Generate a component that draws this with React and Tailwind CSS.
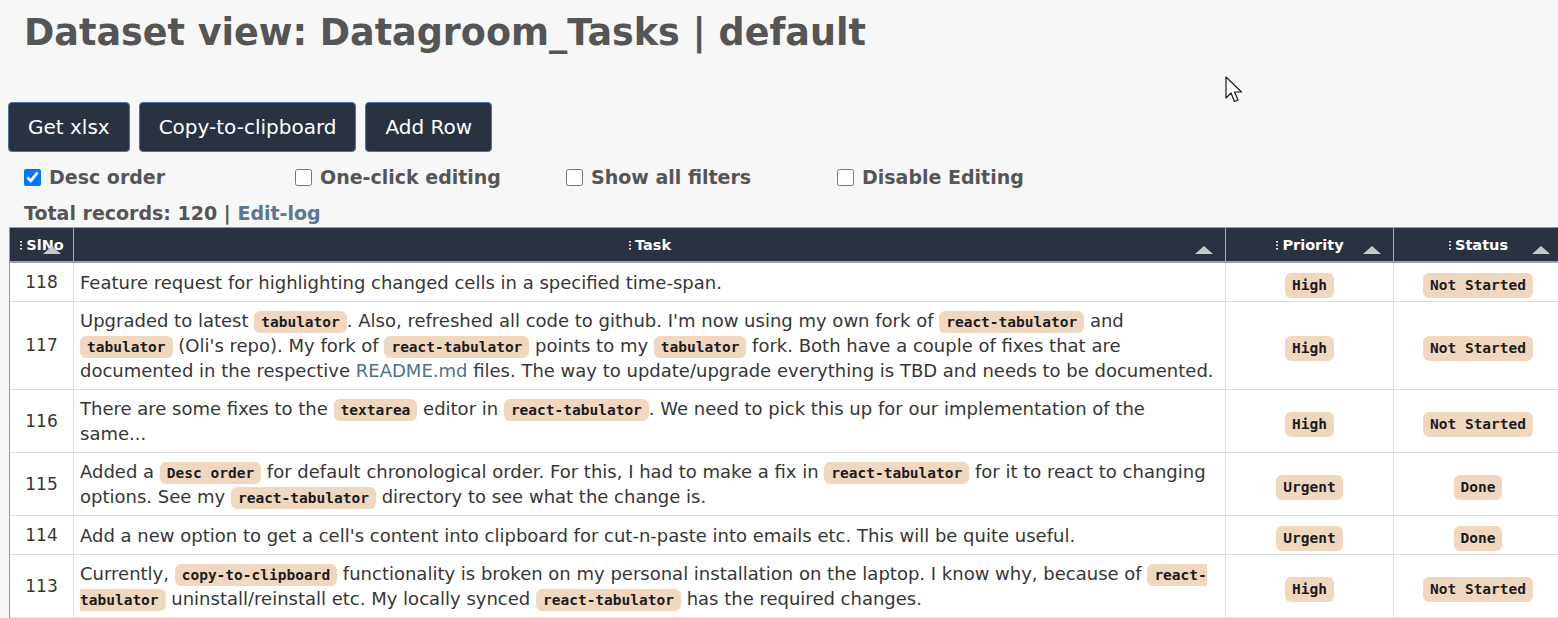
import React from "react";

const rows = [
  { id: 118, pr: "High", st: "Not Started", text: "Feature request for highlighting changed cells in a specified time-span." },
  { id: 117, pr: "High", st: "Not Started", text: "Upgraded to latest `tabulator`. Also, refreshed all code to github. I'm now using my own fork of `react-tabulator` and `tabulator` (Oli's repo). My fork of `react-tabulator` points to my `tabulator` fork. Both have a couple of fixes that are documented in the respective [README.md] files. The way to update/upgrade everything is TBD and needs to be documented." },
  { id: 116, pr: "High", st: "Not Started", text: "There are some fixes to the `textarea` editor in `react-tabulator`. We need to pick this up for our implementation of the same..." },
  { id: 115, pr: "Urgent", st: "Done", text: "Added a `Desc order` for default chronological order. For this, I had to make a fix in `react-tabulator` for it to react to changing options. See my `react-tabulator` directory to see what the change is." },
  { id: 114, pr: "Urgent", st: "Done", text: "Add a new option to get a cell's content into clipboard for cut-n-paste into emails etc. This will be quite useful." },
  { id: 113, pr: "High", st: "Not Started", text: "Currently, `copy-to-clipboard` functionality is broken on my personal installation on the laptop. I know why, because of `react-tabulator` uninstall/reinstall etc. My locally synced `react-tabulator` has the required changes." },
];

function RichText({ text }) {
  const parts = text.split(/(`[^`]+`|\[[^\]]+\])/g);
  return parts.map((p, i) => {
    if (p.startsWith("`")) {
      return (
        <code
          key={i}
          className="rounded-[6px] bg-[#f0d8c0] px-[7px] py-[3px] align-baseline font-bold text-[14.5px] leading-none text-[#1b1b1b] [box-decoration-break:slice] [font-family:'DejaVu_Sans_Mono',monospace]"
        >
          {p.slice(1, -1)}
        </code>
      );
    }
    if (p.startsWith("[")) {
      return (
        <span key={i} className="text-[#50708f]">
          {p.slice(1, -1)}
        </span>
      );
    }
    return <React.Fragment key={i}>{p}</React.Fragment>;
  });
}

function Badge({ children }) {
  return (
    <span className="translate-y-[3px] rounded-[6px] bg-[#f0d8c0] px-[7px] py-[4px] font-bold text-[14.5px] leading-[17px] text-[#1b1b1b] [font-family:'DejaVu_Sans_Mono',monospace]">
      {children}
    </span>
  );
}

function Dots() {
  return (
    <svg width="3" height="9" viewBox="0 0 3 9" className="mr-[4px] shrink-0">
      <rect x="1" y="0" width="2" height="1.5" fill="#e5e5e5" />
      <rect x="1" y="3.5" width="2" height="1.5" fill="#e5e5e5" />
      <rect x="1" y="7" width="2" height="1.5" fill="#e5e5e5" />
    </svg>
  );
}

function Arrow() {
  return (
    <svg width="18" height="8" viewBox="0 0 18 8" className="absolute right-[12px] top-[18px]">
      <polygon points="0,8 9,0 18,8" fill="#c8c8c8" />
    </svg>
  );
}

function HeadCell({ label, last }) {
  return (
    <div className={`relative h-[33px] ${last ? "" : "border-r border-[#aaaaaa]"}`}>
      <div className="flex items-center justify-center pt-[8px] text-[14.5px] font-bold leading-[18px] text-white">
        <Dots />
        <span>{label}</span>
      </div>
      <Arrow />
    </div>
  );
}

function Check({ label, checked }) {
  return (
    <label className="flex w-[271px] items-center gap-[8px]">
      <input type="checkbox" defaultChecked={checked} className="m-0 h-[17px] w-[17px] accent-[#0075ff]" />
      <span>{label}</span>
    </label>
  );
}

function Cursor() {
  return (
    <svg width="20" height="28" viewBox="0 0 20 28" className="pointer-events-none absolute left-[1225px] top-[76px]">
      <path d="M1 1 L1 22 L6 17 L9.5 25.5 L13 24 L9.5 16 L16.5 16 Z" fill="#ffffff" stroke="#1a1a1a" strokeWidth="1.2" strokeLinejoin="round" />
    </svg>
  );
}

export default function App() {
  return (
    <div className="relative h-screen w-full overflow-hidden bg-[#f7f7f7] [font-family:'DejaVu_Sans',Verdana,sans-serif]">
      <h1 className="px-[24px] pt-[11px] text-[36.5px] font-bold leading-[44px] text-[#555555]">
        Dataset view: Datagroom_Tasks | default
      </h1>

      <div className="mt-[47px] flex gap-[9px] px-[8px]">
        {["Get xlsx", "Copy-to-clipboard", "Add Row"].map((b) => (
          <button
            key={b}
            className="h-[50px] rounded-[4px] border border-[#4576a6] bg-[#2a3140] px-[19px] text-[20px] text-white"
          >
            {b}
          </button>
        ))}
      </div>

      <div className="mt-[13px] flex h-[24px] pl-[24px] text-[19px] font-bold leading-[24px] text-[#555555]">
        <Check label="Desc order" checked />
        <Check label="One-click editing" />
        <Check label="Show all filters" />
        <Check label="Disable Editing" />
      </div>

      <div className="mt-[12px] h-[24px] pl-[24px] text-[19px] font-bold leading-[24px] text-[#555555]">
        Total records: 120 | <span className="text-[#5b7593]">Edit-log</span>
      </div>

      <div className="ml-[9px] mt-[2px] w-[1554px] border-l border-t border-[#999999] bg-white">
        <div className="grid grid-cols-[64px_1152px_168px_168px] border-b-2 border-[#a0a0a0] bg-[#2a3140]">
          <HeadCell label="SlNo" />
          <HeadCell label="Task" />
          <HeadCell label="Priority" />
          <HeadCell label="Status" last />
        </div>
        {rows.map((r) => (
          <div
            key={r.id}
            className="grid min-h-[39px] grid-cols-[64px_1152px_168px_168px] border-b border-[#dddddd] text-[18px] leading-[25px] text-[#363636]"
          >
            <div className="flex items-center justify-center border-r border-[#dddddd] text-[17px]">{r.id}</div>
            <div className="flex items-center border-r border-[#dddddd] py-[6px] pl-[6px] pr-[9px]">
              <div>
                <RichText text={r.text} />
              </div>
            </div>
            <div className="flex items-center justify-center border-r border-[#dddddd]">
              <Badge>{r.pr}</Badge>
            </div>
            <div className="flex items-center justify-center">
              <Badge>{r.st}</Badge>
            </div>
          </div>
        ))}
      </div>

      <Cursor />
    </div>
  );
}
